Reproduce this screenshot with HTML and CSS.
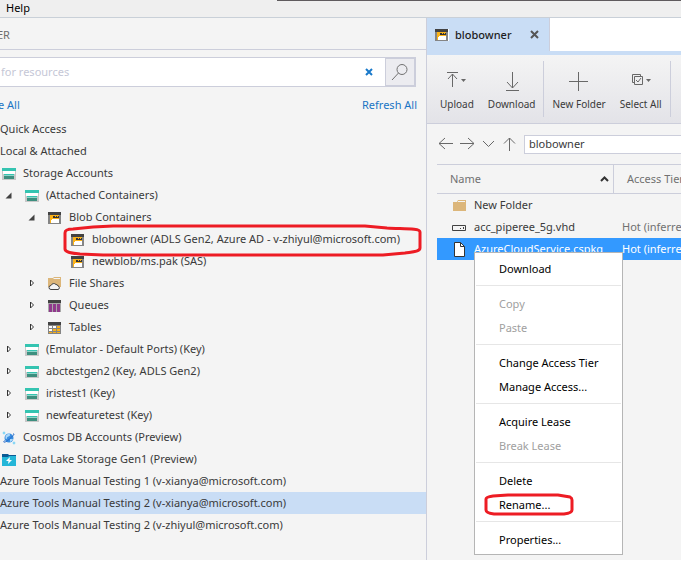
FILE: index.html
```html
<!DOCTYPE html>
<html lang="en">
<head>
<meta charset="utf-8">
<title>Storage Explorer</title>
<link rel="stylesheet" href="styles.css">
</head>
<body>
<svg class="sprites" aria-hidden="true">
  <symbol id="account" viewBox="0 0 14 12"><path fill="#35c4b1" d="M0 0h14v3H0z"/><path fill="#c8c8c8" d="M0 3h2v9H0zM12 3h2v9h-2z"/><path fill="#fff" d="M1 3h12v3H1z"/><path fill="#35c4b1" d="M2 6h10v1H2z"/><path fill="#8fd5ca" d="M2 7h10v1H2z"/><path fill="#3d8f7f" d="M2 8h10v3H2z"/><path fill="#c8c8c8" d="M2 11h10v1H2z"/></symbol>
  <symbol id="blob" viewBox="0 0 14 12"><path fill="#424242" d="M0 0h13v3H0z"/><path fill="#858585" d="M0 3h13v9H0z"/><path fill="#fbb217" d="M2 3h9v8H2z"/><path fill="#333" d="M5 4h2v1h1V4h1v1h1V4h1v2H5z"/><path fill="#fff" d="M4 7h7v4H3V8h1z"/></symbol>
  <symbol id="queue" viewBox="0 0 14 12"><path fill="#424242" d="M0 0h13v3H0z"/><path fill="#a9a9a9" d="M0 3h13v9H0z"/><path fill="#903a8c" d="M1 4h3v8H1zM5 4h3v8H5zM9 4h3v8H9z"/></symbol>
  <symbol id="table" viewBox="0 0 14 12"><path fill="#424242" d="M0 0h13v3H0z"/><path fill="#858585" d="M0 3h13v9H0z"/><path fill="#fff" d="M1 4h3v2H1zM5 4h3v2H5zM1 7h3v2H1z"/><path fill="#fbb217" d="M9 4h3v2H9zM5 7h3v2H5zM9 7h3v2H9zM1 10h3v1H1zM5 10h3v1H5zM9 10h3v1H9z"/></symbol>
  <symbol id="share" viewBox="0 0 14 14"><path fill="#dcb67a" d="M0 3V1h5l1-1h7v10H0z"/><path fill="#f4f4f4" d="M6 1h6v1H5z"/><path fill="#f4f4f4" stroke="#444" d="M3 12.500a2 2 0 0 1 0-4 3 3 0 0 1 5-1 2 2 0 0 1 2 1.500 1.800 1.800 0 0 1 0 3.500z"/></symbol>
  <symbol id="cosmos" viewBox="0 0 14 14"><circle cx="7" cy="7" r="4.500" fill="#3a8ee0"/><path fill="#a9d8fa" d="M4 4.500c2-2.500 4-2 4-.5S5 5.500 5 7s-1.500 1-1.500 0S3.500 5 4 4.500zM8 8h3c-.5 1.500-1.500 2.500-3 3z"/><path fill="none" stroke="#2469c9" d="M2.500 9.500C.5 12 3 12 7.500 8S13 2.500 11 3"/><path fill="#62cdf5" d="m2 0 .6 1.400L4 2l-1.400.6L2 4l-.6-1.400L0 2l1.400-.6zM12 10l.6 1.400L14 12l-1.400.6L12 14l-.6-1.400L10 12l1.400-.6z"/></symbol>
  <symbol id="lake" viewBox="0 0 14 12"><path fill="#0b5a94" d="M0 0h6l1 1h7v3H0z"/><path fill="#24b6d8" d="M0 3h6l1-1h7v10H0z"/><path fill="#fff" d="m8 3-4 4h2.500L6 10l4-4H7.500z"/></symbol>
  <symbol id="closed" viewBox="0 0 14 10"><path fill="#fff" stroke="#333" d="m5.500 2 3 3-3 3z"/></symbol>
  <symbol id="open" viewBox="0 0 14 10"><path fill="#424242" d="M9.500 2.500v6h-6z"/></symbol>
</svg>

<nav class="menubar"><button type="button">Help</button></nav>

<main class="workspace">
  <section class="explorer">
    <h1>ER</h1>
    <form class="search">
      <input type="text" aria-label="Search for resources" placeholder="for resources">
      <button type="button" class="clear" aria-label="Clear"><svg width="8" height="8" viewBox="0 0 8 8"><path d="m1 1 6 6M7 1 1 7"/></svg></button>
      <button type="button" class="go" aria-label="Search"><svg width="20" height="20" viewBox="0 0 20 20"><circle cx="12" cy="7.500" r="5"/><path d="m8.500 11-6.500 7"/></svg></button>
    </form>
    <div class="links"><a href="#collapse">e All</a><a href="#refresh">Refresh All</a></div>
    <ul class="tree">
      <li class="root">Quick Access</li>
      <li class="root">Local &amp; Attached</li>
      <li class="l0"><svg class="ico"><use href="#account"/></svg>Storage Accounts</li>
      <li class="l1"><svg class="twisty"><use href="#open"/></svg><svg class="ico"><use href="#account"/></svg>(Attached Containers)</li>
      <li class="l2"><svg class="twisty"><use href="#open"/></svg><svg class="ico"><use href="#blob"/></svg>Blob Containers</li>
      <li class="l3 marked"><svg class="ico"><use href="#blob"/></svg>blobowner (ADLS Gen2, Azure AD - v-zhiyul@microsoft.com)
        <svg class="mark" width="360" height="34" viewBox="0 0 360 34" aria-hidden="true"><path d="M2 9c0-3 2-4 8-4l20-2 20-1h252l22 2c16 1 33 0 33 4v16c0 4-9 4-15 5l-22 2H40l-23-1c-10-1-15-2-15-5z"/></svg></li>
      <li class="l3"><svg class="ico"><use href="#blob"/></svg>newblob/ms.pak (SAS)</li>
      <li class="l2"><svg class="twisty"><use href="#closed"/></svg><svg class="ico tall"><use href="#share"/></svg>File Shares</li>
      <li class="l2"><svg class="twisty"><use href="#closed"/></svg><svg class="ico"><use href="#queue"/></svg>Queues</li>
      <li class="l2"><svg class="twisty"><use href="#closed"/></svg><svg class="ico"><use href="#table"/></svg>Tables</li>
      <li class="l1"><svg class="twisty"><use href="#closed"/></svg><svg class="ico"><use href="#account"/></svg>(Emulator - Default Ports) (Key)</li>
      <li class="l1"><svg class="twisty"><use href="#closed"/></svg><svg class="ico"><use href="#account"/></svg>abctestgen2 (Key, ADLS Gen2)</li>
      <li class="l1"><svg class="twisty"><use href="#closed"/></svg><svg class="ico"><use href="#account"/></svg>iristest1 (Key)</li>
      <li class="l1"><svg class="twisty"><use href="#closed"/></svg><svg class="ico"><use href="#account"/></svg>newfeaturetest (Key)</li>
      <li class="l0"><svg class="ico tall"><use href="#cosmos"/></svg>Cosmos DB Accounts (Preview)</li>
      <li class="l0"><svg class="ico"><use href="#lake"/></svg>Data Lake Storage Gen1 (Preview)</li>
      <li class="root">Azure Tools Manual Testing 1 (v-xianya@microsoft.com)</li>
      <li class="root selected">Azure Tools Manual Testing 2 (v-xianya@microsoft.com)</li>
      <li class="root">Azure Tools Manual Testing 2 (v-zhiyul@microsoft.com)</li>
    </ul>
  </section>

  <section class="editor">
    <div class="tabs">
      <div class="tab"><svg class="ico" aria-hidden="true"><use href="#blob"/></svg><span>blobowner</span><button type="button" aria-label="Close tab"><svg width="9" height="9" viewBox="0 0 9 9"><path d="m1 1 7 7M8 1 1 8"/></svg></button></div>
    </div>
    <div class="toolbar">
      <div class="group">
        <button type="button"><svg width="22" height="22" viewBox="0 0 22 22"><path d="M1 2.500h11M6.500 17V4M2 9l4.500-5L11 9"/><path class="caret" d="M15 9h5l-2.500 3z"/></svg>Upload</button>
        <button type="button"><svg width="22" height="22" viewBox="0 0 22 22"><path d="M11.500 2v16M6 12l5.500 6 5.500-6M5 20.500h13"/></svg>Download</button>
      </div>
      <div class="group">
        <button type="button"><svg width="22" height="22" viewBox="0 0 22 22"><path d="M1 11.500h19M10.500 2v19"/></svg>New Folder</button>
        <button type="button"><svg width="22" height="22" viewBox="0 0 22 22"><path d="M4.500 12.500h-2v-8h8v2M4.500 6.500h8v8h-8zM6 10l2 2 3-4"/><path class="caret" d="M16 9h5l-2.500 3z"/></svg>Select All</button>
      </div>
    </div>
    <div class="address">
      <button type="button" aria-label="Back"><svg width="16" height="16" viewBox="0 0 16 16"><path d="M15 7.500H1M7 2 1 7.500 7 13"/></svg></button>
      <button type="button" aria-label="Forward"><svg width="16" height="16" viewBox="0 0 16 16"><path d="M1 7.500h14M9 2l6 5.500L9 13"/></svg></button>
      <button type="button" aria-label="History"><svg width="16" height="16" viewBox="0 0 16 16"><path d="m3 5 5.500 5.500L14 5"/></svg></button>
      <button type="button" aria-label="Up"><svg width="16" height="16" viewBox="0 0 16 16"><path d="M8.500 15V2M3 7.500 8.500 2 14 7.500"/></svg></button>
      <input type="text" aria-label="Path" value="blobowner">
    </div>
    <div class="files">
      <table>
        <colgroup><col class="name-col"><col></colgroup>
        <thead><tr><th><div class="head">Name<svg width="9" height="6" viewBox="0 0 9 6"><path d="m1 5 3.500-3.500L8 5"/></svg></div></th><th class="tier">Access Tier</th></tr></thead>
        <tbody>
          <tr><td><div class="file"><svg width="15" height="15" viewBox="0 0 15 15"><path fill="#dcb67a" d="M1 4h4l1-2h8v11H1z"/><path fill="#f4f4f4" d="M6 3h7v1H6z"/></svg>New Folder</div></td><td></td></tr>
          <tr><td><div class="file"><svg width="15" height="15" viewBox="0 0 15 15"><path fill="none" stroke="#424242" d="M.5 5.500h13v5H.5z"/><path fill="#424242" d="M8 8h1v1H8zM11 7h1v2h-1z"/></svg>acc_piperee_5g.vhd</div></td><td>Hot (inferred)</td></tr>
          <tr class="selected"><td><div class="file"><svg width="15" height="15" viewBox="0 0 15 15"><path fill="#fff" stroke="#333" d="M2.500.5h6l4 4v10h-10z"/><path fill="none" stroke="#333" d="M8.500.5v4h4"/></svg>AzureCloudService.cspkg</div></td><td>Hot (inferred)</td></tr>
        </tbody>
      </table>
      <div class="context" role="menu">
        <button type="button" role="menuitem">Download</button>
        <hr>
        <button type="button" role="menuitem" disabled>Copy</button>
        <button type="button" role="menuitem" disabled>Paste</button>
        <hr>
        <button type="button" role="menuitem">Change Access Tier</button>
        <button type="button" role="menuitem">Manage Access...</button>
        <hr>
        <button type="button" role="menuitem">Acquire Lease</button>
        <button type="button" role="menuitem" disabled>Break Lease</button>
        <hr>
        <button type="button" role="menuitem">Delete</button>
        <button type="button" role="menuitem" class="marked">Rename...<svg class="mark" width="90" height="24" viewBox="0 0 90 24" aria-hidden="true"><path d="M2 6q0-2 7-3l15-1h50l12 2q2 1 2 3v10q0 3-8 4H10q-8-1-8-4z"/></svg></button>
        <hr>
        <button type="button" role="menuitem">Properties...</button>
      </div>
    </div>
  </section>
</main>
</body>
</html>
```

FILE: styles.css
```css
* { box-sizing: border-box; }

body {
  margin: 0;
  min-height: 100vh;
  display: flex;
  flex-direction: column;
  padding-bottom: 3px;
  background: #fff;
  color: #3a3a3a;
  font: 11px/22px "Noto Sans", "Open Sans", sans-serif;
  overflow: hidden;
}

button, input { font: inherit; color: inherit; }
button { padding: 0; border: 0; background: none; }
svg { flex: none; }
.sprites { position: absolute; width: 0; height: 0; }

.menubar {
  height: 18px;
  padding-left: 6px;
  background: linear-gradient(#5f5b5e, #5f5b5e) 277px 0 / 100% 1px no-repeat #efefef;
  border-bottom: 1px solid #c9d0d8;
  color: #000;
}
.menubar button { display: block; line-height: 15px; }

.workspace {
  flex: 1;
  display: grid;
  grid-template-columns: minmax(0, 427fr) minmax(0, 254fr);
  background: #f4f4f4;
}

.explorer { border-right: 1px solid #cccedb; }
.explorer h1 {
  margin: 0;
  height: 32px;
  border-bottom: 1px solid #cccedb;
  color: #6d6d6d;
  font-size: 11px;
  font-weight: 400;
  line-height: 34px;
  text-indent: -3px;
}

.search {
  display: flex;
  height: 30px;
  margin: 7px 10px 0 0;
  background: #fff;
  border: 1px solid #cccedb;
  border-left: 0;
}
.search input {
  flex: 1;
  min-width: 0;
  padding: 0 1px;
  border: 0;
  background: none;
}
.search input::placeholder { color: #c5c7d6; opacity: 1; }
.clear { display: grid; place-items: center; width: 32px; }
.clear path { stroke: #1979ca; stroke-width: 2; }
.go {
  display: grid;
  place-items: center;
  width: 30px;
  background: #ececf0;
  border: 1px solid #cccedb;
}
.go svg { fill: none; stroke: #717171; stroke-width: 1; }

.links {
  display: flex;
  justify-content: space-between;
  padding: 7px 9px 2px 0;
}
.links a { color: #1a75c4; text-decoration: none; }
.links a:first-child { text-indent: -2px; }

.tree { margin: 0; padding: 0; list-style: none; }
.tree li {
  display: flex;
  align-items: center;
  height: 22px;
  white-space: nowrap;
}
.tree .l0 { padding-left: 2px; }
.tree .l1 { padding-left: 2px; }
.tree .l2 { padding-left: 25px; }
.tree .l3 { padding-left: 71px; }
.tree .selected { background: #c9ddf5; }
.ico { width: 14px; height: 12px; margin: 2px 7px 0 0; }
.ico.tall { height: 14px; }
.twisty { width: 14px; height: 10px; margin-right: 9px; }

.marked { position: relative; }
.mark { position: absolute; fill: none; stroke: #ed1c24; stroke-width: 3; }
.tree .mark { left: 63px; top: -4px; }

.tabs { display: flex; height: 37px; background: #fff; border-bottom: 4px solid #c9ddf5; }
.tab {
  display: flex;
  align-items: center;
  padding: 0 10px 0 8px;
  background: #c9ddf5;
  border-right: 1px solid #cccedb;
  color: #1e1e1e;
}
.tab .ico { margin: 0 6px 0 0; background: #fff; }
.tab span { font-weight: 500; margin-right: 18px; }
.tab button { display: grid; }
.tab button path { stroke: #555; stroke-width: 2; }

.toolbar {
  display: flex;
  height: 69px;
  padding: 6px 0;
  background: linear-gradient(#f4f4f4, #e3e3e8);
  border-bottom: 1px solid #cccedb;
  font-size: 10px;
}
.group { display: flex; gap: 14px; padding: 0 8px; border-right: 1px solid #cccedb; }
.group:first-child { padding-left: 13px; }
.group button {
  display: flex;
  flex-direction: column;
  align-items: center;
  gap: 1px;
  padding-top: 9px;
  white-space: nowrap;
}
.group svg, .address svg { fill: none; stroke: #686868; }
.group .caret { fill: #686868; stroke: none; }

.address { display: flex; align-items: center; gap: 5px; height: 40px; padding-left: 11px; }
.address button { display: grid; }
.address input {
  flex: 1;
  min-width: 0;
  height: 19px;
  margin-left: 2px;
  padding: 0 4px;
  background: #fff;
  border: 1px solid #cccedb;
  border-right: 0;
}

.files { position: relative; margin-left: 10px; }
.files table {
  width: 100%;
  table-layout: fixed;
  border-collapse: separate;
  border-spacing: 0;
}
.name-col { width: 177px; }
.files th {
  height: 30px;
  padding: 0 0 0 13px;
  border: 1px solid #cccedb;
  border-width: 1px 0;
  color: #717171;
  font-weight: 400;
  text-align: left;
  white-space: nowrap;
}
.files th:first-child { border-right-width: 1px; }
.head { display: flex; align-items: center; justify-content: space-between; padding-right: 4px; }
.head path { fill: none; stroke: #333; stroke-width: 2; }
.files td { height: 22px; padding: 0 0 0 8px; color: #717171; white-space: nowrap; overflow: hidden; }
.files td:first-child { padding-left: 15px; color: #3a3a3a; }
.file { display: flex; align-items: center; gap: 7px; }
.files .selected td, .files .selected td:first-child { background: #3399ff; color: #fff; }

.context {
  position: absolute;
  left: 37px;
  top: 88px;
  width: 149px;
  padding: 4px 1px 2px;
  background: #fff;
  border: 1px solid #b5b5b5;
  color: #000;
}
.context button {
  display: block;
  width: 100%;
  height: 24px;
  padding-left: 23px;
  line-height: 24px;
  text-align: left;
}
.context button:disabled { color: #a0a0a0; }
.context hr { height: 1px; margin: 4px 0 6px; border: 0; background: #e6e6e6; }
.context .mark { left: 8px; top: 0; }
```
